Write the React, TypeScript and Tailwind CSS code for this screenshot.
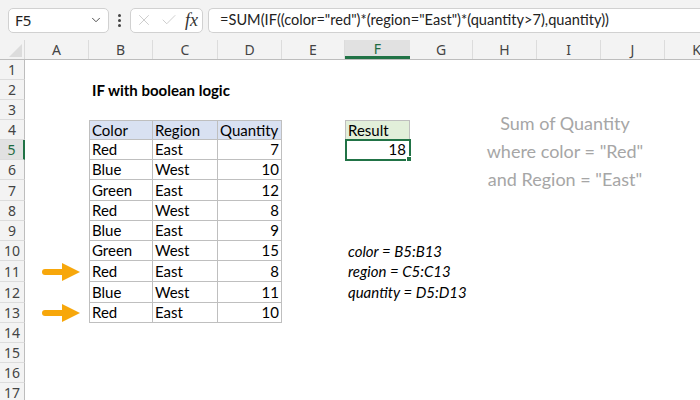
import React from "react";
import { ChevronDown, X, Check } from "lucide-react";

const COLS = ["A", "B", "C", "D", "E", "F", "G", "H", "I", "J", "K"];
const COL_W = [
  "w-[64px]",
  "w-[64px]",
  "w-[65px]",
  "w-[64px]",
  "w-[63px]",
  "w-[65px]",
  "w-[63px]",
  "w-[64px]",
  "w-[64px]",
  "w-[64px]",
  "w-[64px]",
];
// row heights for rows 1..17
const ROW_H: Record<number, string> = { 7: "h-[21px]", 11: "h-[21px]", 12: "h-[21px]" };

const DATA: [string, string, number][] = [
  ["Red", "East", 7],
  ["Blue", "West", 10],
  ["Green", "East", 12],
  ["Red", "West", 8],
  ["Blue", "East", 9],
  ["Green", "West", 15],
  ["Red", "East", 8],
  ["Blue", "West", 11],
  ["Red", "East", 10],
];

const NOTES: Record<number, string> = {
  10: "color = B5:B13",
  11: "region = C5:C13",
  12: "quantity = D5:D13",
};

const cellFont = "font-['Lato','Liberation_Sans',sans-serif] text-[15px] text-black";

function Arrow() {
  return (
    <svg width="38" height="20" viewBox="0 0 38 20">
      <path d="M3 7 H21 V13 H3 Q0 13 0 10 Q0 7 3 7 Z" fill="#f7a70b" />
      <path d="M20 1 L38 10 L20 19 Z" fill="#f7a70b" />
    </svg>
  );
}

function Cell({ r, c }: { r: number; c: number }) {
  const base = `${COL_W[c]} shrink-0 h-full flex items-center whitespace-nowrap ${cellFont}`;
  const col = COLS[c];

  // data table B4:D13
  if (r >= 4 && r <= 13 && c >= 1 && c <= 3) {
    const header = r === 4;
    const border = `border-r border-b border-[#bfbfbf] ${c === 1 ? "border-l" : ""} ${header ? "border-t bg-[#d9e1f2]" : ""}`;
    let text: React.ReactNode = "";
    let align = "justify-start pl-[2px]";
    if (header) text = ["Color", "Region", "Quantity"][c - 1];
    else {
      const row = DATA[r - 5];
      text = row[c - 1];
      if (c === 3) align = "justify-end pr-[2px]";
    }
    return <div className={`${base} ${border} ${align}`}>{text}</div>;
  }

  if (col === "A" && (r === 11 || r === 13)) {
    return (
      <div className={`${base} justify-end pr-[9px]`}>
        <Arrow />
      </div>
    );
  }

  if (col === "B" && r === 2) {
    return <div className={`${base} pl-[3px] font-bold`}>IF with boolean logic</div>;
  }

  if (col === "F" && r === 4) {
    return (
      <div className={`${base} pl-[2px] border border-[#bfbfbf] bg-[#e2efda]`}>Result</div>
    );
  }

  if (col === "F" && r === 5) {
    return (
      <div className={`${base} relative justify-end pr-[3px] border-x border-b border-[#bfbfbf]`}>
        18
        <div className="absolute -left-[1px] -top-[1px] w-[66px] h-[22px] border-2 border-[#217346]" />
        <div className="absolute -right-[3px] -bottom-[3px] w-[6px] h-[6px] bg-[#217346] border border-white" />
      </div>
    );
  }

  if (col === "F" && NOTES[r]) {
    return <div className={`${base} pl-[3px] italic`}>{NOTES[r]}</div>;
  }

  return <div className={base} />;
}

export default function App() {
  const rows = Array.from({ length: 17 }, (_, i) => i + 1);
  return (
    <div className="w-[700px] h-[400px] overflow-hidden bg-white relative font-['Noto_Sans','Open_Sans',sans-serif]">
      {/* Formula bar */}
      <div className="h-[40px] bg-[#f3f3f3] flex items-center pl-[8px]">
        <div className="w-[101px] h-[25px] bg-white border border-[#d1d1d1] rounded-[5px] flex items-center justify-between pl-[6px] pr-[5px] text-[15px] text-[#222]">
          <span>F5</span>
          <ChevronDown size={14} strokeWidth={1.6} className="text-[#444]" />
        </div>
        <div className="w-[21px] flex flex-col items-center gap-[2px]">
          <span className="w-[3px] h-[3px] rounded-full bg-[#444]" />
          <span className="w-[3px] h-[3px] rounded-full bg-[#444]" />
          <span className="w-[3px] h-[3px] rounded-full bg-[#444]" />
        </div>
        <div className="w-[73px] h-[25px] bg-white border border-[#d1d1d1] rounded-[5px] flex items-center pl-[4px] pr-[3px] gap-[7px]">
          <X size={18} strokeWidth={1.1} className="text-[#c4c4c4]" />
          <Check size={18} strokeWidth={1.1} className="text-[#c4c4c4]" />
          <span className="font-['Liberation_Serif',serif] italic text-[18px] text-[#333] leading-none">fx</span>
        </div>
        <div className="ml-[5px] flex-1 h-[25px] bg-white border border-[#d1d1d1] rounded-l-[5px] border-r-0 flex items-center pl-[11px] text-[14.6px] text-[#222] whitespace-nowrap font-['Lato',sans-serif]">
          =SUM(IF((color="red")*(region="East")*(quantity&gt;7),quantity))
        </div>
      </div>

      {/* Column headers */}
      <div className="flex h-[20px] bg-[#f3f3f3] border-b border-[#bdbdbd] text-[14px] text-[#444]">
        <div className="w-[25px] shrink-0 h-full border-r border-[#d9d9d9] relative overflow-hidden">
          <div className="absolute right-[2px] bottom-[2px] w-0 h-0 border-l-[13px] border-l-transparent border-b-[13px] border-b-[#dcdcdc]" />
        </div>
        {COLS.map((c, i) =>
          c === "F" ? (
            <div
              key={c}
              className={`${COL_W[i]} shrink-0 h-full flex items-center justify-center bg-[#e1e1e1] border-b-[3px] border-[#217346] text-[#1e6b41] -mb-[1px]`}
            >
              F
            </div>
          ) : (
            <div key={c} className={`${COL_W[i]} shrink-0 h-full flex items-center justify-center border-r border-[#dcdcdc]`}>
              {c}
            </div>
          )
        )}
      </div>

      {/* Grid rows */}
      {rows.map((r) => (
        <div key={r} className={`flex ${ROW_H[r] ?? "h-[20px]"}`}>
          {r === 5 ? (
            <div className="w-[25px] shrink-0 h-full flex items-center justify-center bg-[#e1e1e1] border-r-2 border-[#217346] border-b border-b-[#dcdcdc] text-[14px] text-[#1e6b41]">
              {r}
            </div>
          ) : (
            <div className="w-[25px] shrink-0 h-full flex items-center justify-center bg-[#f3f3f3] border-r border-[#bdbdbd] border-b border-b-[#dcdcdc] text-[14px] text-[#444]">
              {r}
            </div>
          )}
          {COLS.map((_, c) => (
            <Cell key={c} r={r} c={c} />
          ))}
        </div>
      ))}

      {/* Text box note */}
      <div className="absolute left-[470px] top-[109px] w-[190px] flex flex-col items-center text-[#a6a6a6] text-[18px] leading-[28px] font-['Lato',sans-serif]">
        <span>Sum of Quantity</span>
        <span>where color = "Red"</span>
        <span>and Region = "East"</span>
      </div>
    </div>
  );
}
